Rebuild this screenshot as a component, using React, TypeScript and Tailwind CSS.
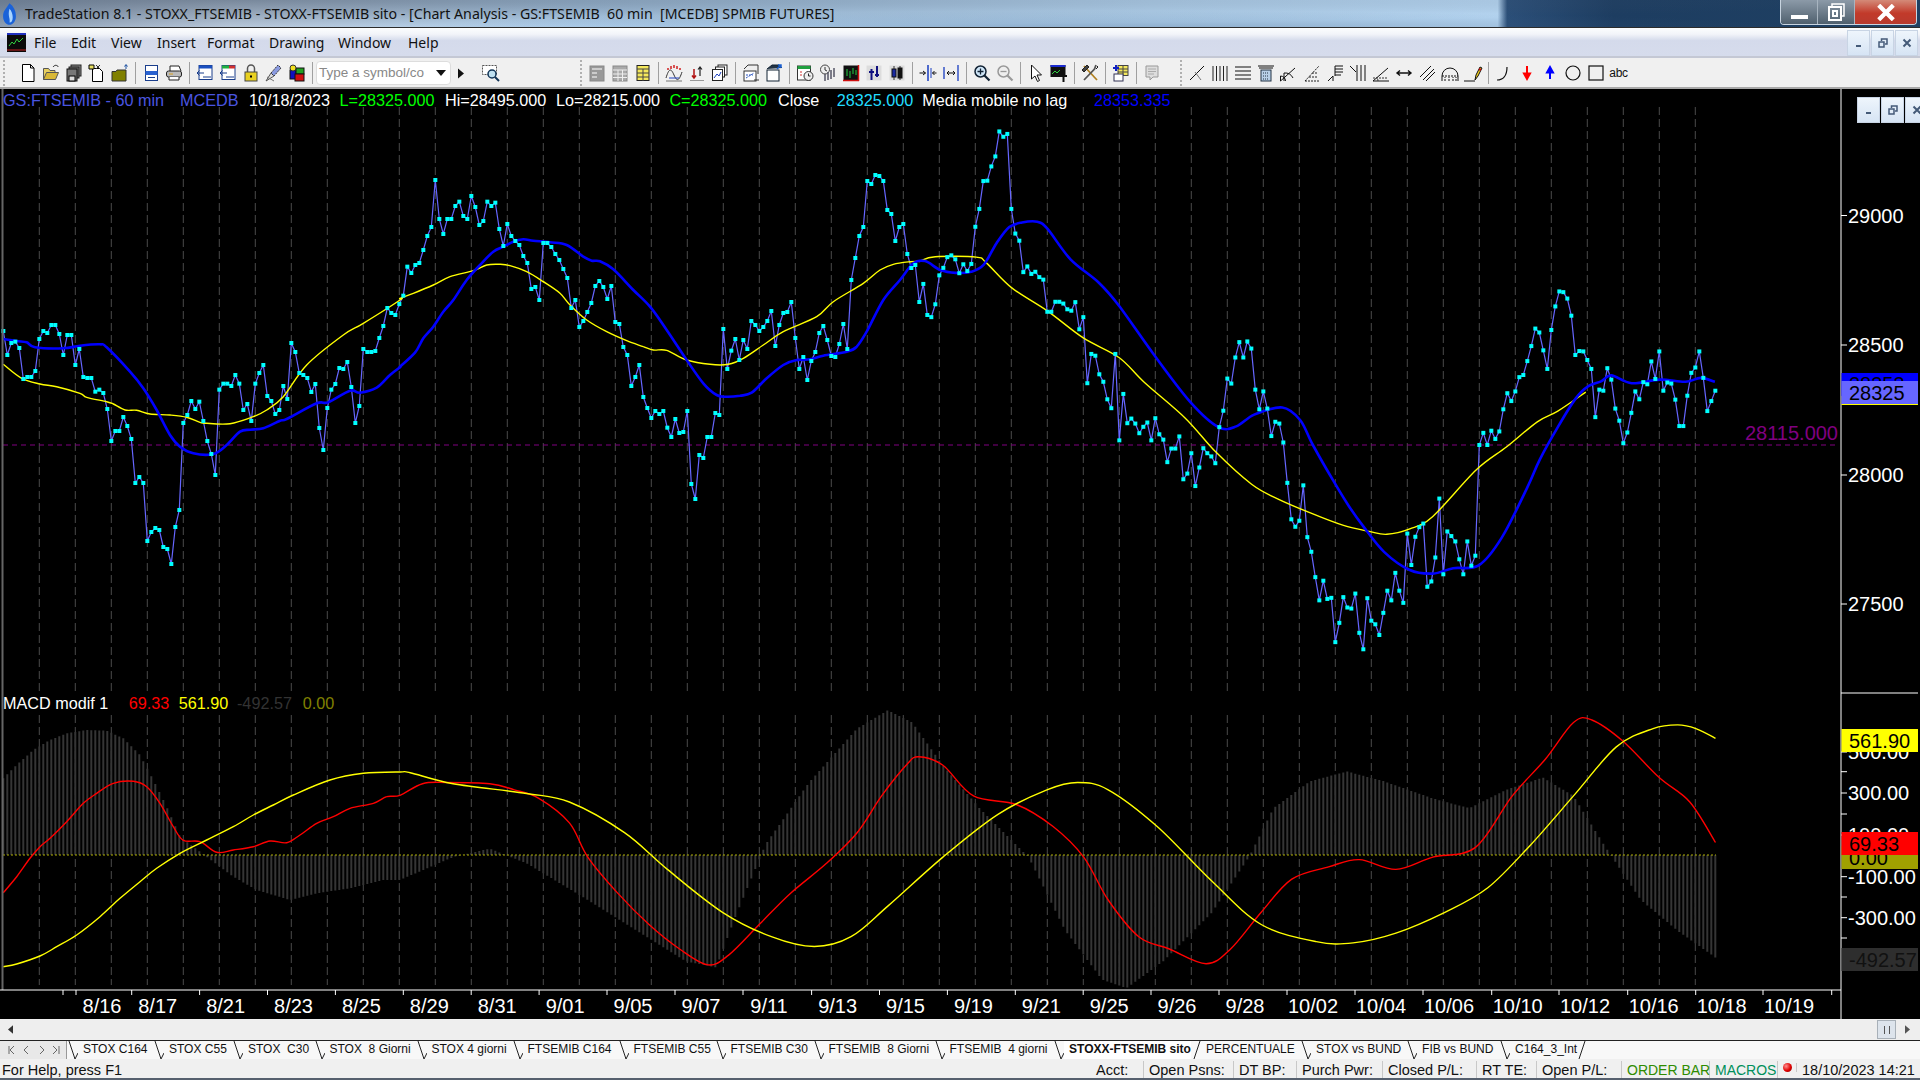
import React from "react";

// bar closes read off the chart, bar spacing is 4px
const closesA = [93,165,129,125,144,237,231,231,213,117,93,99,75,75,102,165,105,105,195,147,231,234,234,275,269,279,327,423,393,393,351,378,417,549,531,549,723,696,684,690,741,747,792,681,630,369,345,303,327,305,363,423,462,525,269,251,251,258,225,251,330,312,363,251,219,195,288,303,342,330,258,297,129,156,219,225,234,276,252,384,450,324,269,252,204,207,186,261,369,318,147,156,156,153,114,78,24,39,45,12];
const closesB = [527,440,459,435,429,390,348,321,180,297,342,297,297,258,245,288,297,228,261,315,303,245,258,248,327,378,312,348,363,375,408,429,507,501,540,369,369,381,402,420,447,474,564,540,621,603,576,549,498,483,501,537,498,606,612,681,705,798,771,735,831,864,894,873,882,873,923,951,897,939,936,873,1092,1137,1005,1014,951,951,879,885,627,747,692,657,720,660,687,603,615,633,621,603,573,678,615,579,576,546,654,747,711,780,723,696,639,618,660,708,711,672,612,687,480,414,348,321,183,192,165,168,183,270,282,363,321,312,402,444,435,546];
const closesC = [459,546,552,516,435,414,384,379,390,429,404,423,403,299,249,171,170,130,102,32,47,39,249,318,338,426,410,431,425,440,447,537,537,509,509,514,530,534,510,586,552,737,655,660,712,733,782,807,655,897,767,849,836,850,877,859,847,897,835,880,895,958,920,920,886,1006,990,933,1025,973,919,933,942,961,860,814,724,738,665,622,665,620,640,755,810,760,808,885,845,850,903,1016,1118,1139,1122,1023,1168,1209,1280,1345,1290,1341,1338,1462,1408,1336,1365,1368,1326,1436,1482,1339,1402,1412,1442,1380,1318,1345,1268,1318,1352,1158,1246,1167,1140,1130,1307,1292,1225,1060,1272,1152,1165,1180,1230,1272,1180,1248,1220,910,876,910,870,893,872,810,765,787,760,720,714,675,633,584,595,645,697,588,522,480,482,500,548,658,647,648,672,697,832,755,758,695,727,808,842,905,875,820,760,782,734,740,676,725,648,758,735,738,783,857,857,772,708,693,648,722,815,787,758];

const bars: [number, number][] = [
  ...closesA.map((v, i): [number, number] => [3.33 + i * 4, 300 + v / 3]),
  ...closesB.map((v, i): [number, number] => [403.33 + i * 4, 120 + v / 3]),
  ...closesC.map((v, i): [number, number] => [923.33 + i * 4, 120 + v / 2.8]),
];

type P = [number, number];
const left = (p: P[]) => p.map(([x, y]): P => [x / 3, 300 + y / 3]);
const mid = (p: P[]) => p.map(([x, y]): P => [400 + x / 3, 120 + y / 3]);
const right = (p: P[]) => p.map(([x, y]): P => [920 + x / 1.96, 120 + y / 2.8]);
const sub = (p: P[]) => p.map(([x, y]): P => [x / 3, 690 + y / 3]);
const shot = (p: P[]) => p.map(([x, y]): P => [x * 1.2245, y * 1.2245]);
const line = (p: P[]) => p.map(([x, y]) => `${x.toFixed(1)},${y.toFixed(1)}`).join(" ");

// the averages are smooth curves, so run the read-off points through catmull-rom
const smooth = (p: P[]) => {
  let d = `M${p[0][0].toFixed(1)} ${p[0][1].toFixed(1)}`;
  for (let i = 0; i < p.length - 1; i++) {
    const a = p[Math.max(i - 1, 0)];
    const b = p[i];
    const c = p[i + 1];
    const e = p[Math.min(i + 2, p.length - 1)];
    const c1x = b[0] + (c[0] - a[0]) / 6;
    const c1y = b[1] + (c[1] - a[1]) / 6;
    const c2x = c[0] - (e[0] - b[0]) / 6;
    const c2y = c[1] - (e[1] - b[1]) / 6;
    d += `C${c1x.toFixed(1)} ${c1y.toFixed(1)} ${c2x.toFixed(1)} ${c2y.toFixed(1)} ${c[0].toFixed(1)} ${c[1].toFixed(1)}`;
  }
  return d;
};

const avgBlue = [
  ...left([[10,117],[50,123],[80,127],[105,142],[190,145],[240,137],[300,133],[320,142],[390,215],[430,265],[470,330],[510,405],[540,440],[580,460],[640,462],[680,435],[720,395],[750,389],[790,385],[840,362],[860,357],[950,310],[985,307],[1050,272],[1080,278],[1130,263],[1170,225],[1200,202]]),
  ...mid([[0,740],[45,698],[70,655],[100,620],[130,575],[160,540],[200,480],[240,435],[280,395],[310,380],[340,365],[370,358],[400,362],[450,367],[500,375],[550,410],[575,422],[600,424],[640,448],[700,510],[750,560],[800,630],[860,720],[910,790],[950,825],[980,830],[1020,827],[1055,818],[1100,775],[1150,735],[1190,720],[1230,718],[1270,707],[1340,695],[1370,680],[1400,635],[1450,540],[1500,480],[1540,430]]),
  ...right([[10,395],[40,420],[70,428],[100,425],[125,405],[150,345],[175,300],[200,287],[230,285],[250,305],[295,390],[350,455],[390,520],[460,660],[530,790],[585,860],[620,858],[655,825],[710,805],[745,840],[770,910],[810,1010],[840,1080],[870,1140],[910,1210],[960,1260],[1005,1270],[1045,1255],[1095,1247],[1140,1170],[1190,1030],[1215,950],[1250,860],[1285,780],[1310,745],[1335,732],[1355,715],[1395,737],[1450,727],[1500,733],[1530,722],[1558,733]]),
];

const avgYellow = [
  ...left([[10,193],[65,235],[120,252],[170,260],[240,280],[260,292],[320,305],[340,312],[375,330],[410,331],[450,342],[510,345],[560,352],[600,367],[620,370],[690,371],[760,350],[800,330],[850,290],[920,195],[1030,105],[1090,70],[1200,0]]),
  ...mid([[0,535],[40,520],[100,495],[150,470],[220,452],[260,435],[300,433],[330,437],[380,455],[430,485],[480,520],[510,555],[560,600],[620,635],[680,662],[730,680],[760,690],[800,691],[860,720],[930,733],[985,733],[1030,715],[1090,675],[1150,635],[1250,590],[1300,545],[1390,490],[1440,450],[1480,433],[1530,425],[1560,424]]),
  ...right([[0,395],[30,383],[110,384],[130,400],[180,470],[250,535],[320,610],[390,665],[440,735],[520,835],[580,930],[650,1020],[700,1060],[770,1103],[830,1135],[880,1152],[915,1160],[960,1145],[1005,1110],[1090,980],[1150,915],[1210,845],[1250,815],[1305,762]]),
];

const macdRed = [
  ...sub([[10,608],[50,560],[90,505],[120,470],[150,445],[200,395],[250,340],[290,310],[340,280],[400,274],[440,290],[480,340],[520,410],[550,451],[600,455],[650,487],[700,480],[760,470],[810,453],[860,458],[900,435],[950,400],[1000,380],[1050,355],[1120,340],[1160,320],[1200,316]]),
  ...shot([[345,640],[365,639],[400,640],[420,645],[440,652],[465,672],[480,700],[505,730],[530,755],[555,775],[578,788],[595,780],[620,755],[645,730],[675,705],[700,680],[720,650],[740,625],[750,618],[770,625],[795,650],[830,657],[860,675],[885,700],[905,735],[930,765],[955,775],[985,787],[1005,775],[1030,745],[1055,718],[1085,708],[1110,702],[1140,710],[1170,700],[1205,692],[1235,650],[1262,620],[1285,590],[1300,588],[1325,605],[1355,635],[1380,655],[1401,688]]),
];

const macdYellow = [
  ...sub([[10,830],[50,822],[120,798],[170,770],[230,735],[300,680],[360,625],[420,575],[470,535],[540,490],[620,450],[700,410],[760,375],[820,345],[880,315],[990,270],[1090,250],[1200,246]]),
  ...shot([[335,631],[370,640],[430,648],[465,655],[510,680],[545,710],[590,745],[630,765],[665,773],[695,765],[725,740],[770,700],[815,665],[855,645],[880,639],[905,645],[945,675],[990,720],[1030,755],[1075,769],[1105,770],[1140,762],[1180,745],[1215,725],[1250,690],[1285,650],[1320,610],[1350,595],[1370,592],[1385,595],[1401,603]]),
];

const histEdge = [
  ...sub([[10,265],[50,225],[100,180],[150,150],[200,130],[260,120],[320,122],[370,145],[420,195],[460,270],[500,350],[540,440],[600,485],[640,515],[700,560],[770,600],[870,630],[950,610],[1050,595],[1150,570],[1200,570]]),
  ...shot([[370,700],[400,693],[430,705],[480,735],[520,760],[560,785],[585,790],[600,750],[625,690],[660,640],[700,595],[725,580],[745,590],[770,625],[800,660],[840,700],[870,760],[900,800],[920,807],[950,785],[990,745],[1020,700],[1040,660],[1070,638],[1100,630],[1130,638],[1170,652],[1200,660],[1230,645],[1260,635],[1285,650],[1310,690],[1340,735],[1370,760],[1401,782]]),
];

const edgeAt = (x: number) => {
  for (let i = 1; i < histEdge.length; i++) {
    const [x0, y0] = histEdge[i - 1];
    const [x1, y1] = histEdge[i];
    if (x <= x1) return y0 + ((y1 - y0) * (x - x0)) / (x1 - x0);
  }
  return histEdge[histEdge.length - 1][1];
};

const histPath = bars.map(([x]) => `M${x.toFixed(1)} 855V${edgeAt(x).toFixed(1)}`).join("");
const gridX = Array.from({ length: 47 }, (_, i) => 39.3 + i * 36);

const dates: [string, number][] = [
  ["8/16", 76],["8/17", 131.7],["8/21", 199.6],["8/23", 267.5],["8/25", 335.4],["8/29", 403.3],["8/31", 471.2],["9/01", 539.1],["9/05", 607],["9/07", 675],["9/11", 743],["9/13", 811.6],["9/15", 879.5],["9/19", 947.4],["9/21", 1015.3],["9/25", 1083.2],["9/26", 1151],["9/28", 1219],["10/02", 1287],["10/04", 1355],["10/06", 1423],["10/10", 1491.7],["10/12", 1559],["10/16", 1627.7],["10/18", 1695.7],["10/19", 1763],
];

const Chart = () => (
  <svg viewBox="0 89 1920 930" className="absolute inset-0 h-full w-full">
    <g stroke="#4a4a4a" strokeDasharray="8 4">
      {gridX.map((x) => (
        <path key={x} d={`M${x} 107V693M${x} 715V985`} />
      ))}
    </g>
    <path d={histPath} stroke="#353535" strokeWidth="2" fill="none" />
    <path d="M3 855H1716" stroke="#b0b000" strokeDasharray="2 2" />
    <path d="M3 445H1836" stroke="#800080" strokeDasharray="5 4" />
    <polyline points={line(bars)} fill="none" stroke="#6666ff" strokeWidth="1.2" />
    <path d={smooth(avgYellow)} fill="none" stroke="#ffff00" strokeWidth="1.4" />
    <path d={smooth(avgBlue)} fill="none" stroke="#0000ff" strokeWidth="2.6" />
    {bars.map(([x, y]) => (
      <rect key={x} x={x - 2} y={y - 2} width="4" height="4" fill="#00ffff" />
    ))}
    <path d={smooth(macdRed)} fill="none" stroke="#ff0000" strokeWidth="1.4" />
    <path d={smooth(macdYellow)} fill="none" stroke="#ffff00" strokeWidth="1.4" />

    <path d="M2.5 89V990" stroke="#666" strokeWidth="2" />
    <path d="M0 990H1841" stroke="#fff" />
    <path d="M1841 89V1019M1841 693H1918" stroke="#fff" />
    <g stroke="#fff">
      {dates.map(([d, x]) => (
        <path key={d} d={`M${x} 990V995`} />
      ))}
      <path d="M63 990V995M1831.7 990V995" />
      {[215.5, 345, 475, 604, 752, 771.7, 793, 814, 835, 876.7, 897, 917.7, 938].map((y) => (
        <path key={y} d={`M1841 ${y}H1847`} />
      ))}
    </g>
    <g fill="#fff" fontSize="20" textAnchor="middle">
      {dates.map(([d, x]) => (
        <text key={d} x={x + 26} y="1013">{d}</text>
      ))}
    </g>
    <text x="1838" y="440" fontSize="20" fill="#800080" textAnchor="end">28115.000</text>
    <g fill="#fff" fontSize="20">
      <text x="1848" y="222.5">29000</text>
      <text x="1848" y="352">28500</text>
      <text x="1848" y="482">28000</text>
      <text x="1848" y="611">27500</text>
      <text x="1848" y="759">500.00</text>
      <text x="1848" y="800">300.00</text>
      <text x="1848" y="842">100.00</text>
      <text x="1848" y="883.7">-100.00</text>
      <text x="1848" y="924.7">-300.00</text>
    </g>

    <rect x="1841.5" y="373" width="76.5" height="23" fill="#0000ff" />
    <text x="1849" y="391" fontSize="20" fill="#000">28353</text>
    <rect x="1841.5" y="381" width="76.5" height="23" fill="#6666ff" />
    <rect x="1841.5" y="404" width="76.5" height="1" fill="#ffff00" />
    <text x="1849" y="400" fontSize="20" fill="#000">28325</text>

    <rect x="1841.5" y="729" width="76.5" height="23" fill="#ffff00" />
    <text x="1849" y="748" fontSize="20" fill="#000">561.90</text>
    <rect x="1841.5" y="846" width="76.5" height="23" fill="#a0a000" />
    <text x="1849" y="865" fontSize="20" fill="#000">0.00</text>
    <rect x="1841.5" y="832" width="76.5" height="23" fill="#ff0000" />
    <text x="1849" y="851" fontSize="20" fill="#000">69.33</text>
    <rect x="1841.5" y="948" width="76.5" height="23" fill="#2e2e2e" />
    <text x="1849" y="967" fontSize="20" fill="#111">-492.57</text>
  </svg>
);

const Ico = ({ children }: { children: React.ReactNode }) => (
  <svg viewBox="0 0 20 20" className="h-[20px] w-[20px]" fill="none" stroke="#000" strokeWidth="1">
    {children}
  </svg>
);

// toolbar drawings, in the order they sit on the bar
const icons: Record<string, React.ReactNode> = {
  newDoc: <path d="M4.5 1.5h8l3.5 3.5v13.5h-11.500zM12.500 1.500v3.500h3.500" fill="#fff" />,
  open: <><path d="M2.500 16.500v-11h5l1.500 2h5v2" fill="#e8d060" stroke="#555" /><path d="M2.500 16.500l3-7h12l-3 7z" fill="#d8b838" stroke="#555" /><path d="M12 4c2-2.500 4-2 5.500 0" stroke="#222" /></>,
  disks: <><rect x="7" y="2" width="10" height="11" fill="#888" stroke="#222" /><rect x="5" y="4" width="10" height="11" fill="#666" stroke="#222" /><rect x="3" y="6" width="10" height="12" fill="#777" stroke="#111" /><rect x="5" y="13" width="6" height="5" fill="#ddd" /></>,
  note: <><path d="M5.500 5.500h7l3 3v10h-10z" fill="#fff" /><path d="M2 2l5 0v4h-5z" fill="#e8e060" /><path d="M9 2l4 4M13 2l-4 4" stroke="#333" /></>,
  folderUp: <><path d="M2 8.500h4l1-1.500h9v11h-14z" fill="#808000" stroke="#333" /><path d="M16 6v-4M14.500 3.500l1.500-2 1.500 2" stroke="#1a4fa0" /></>,
  preview: <><rect x="4.500" y="2.500" width="12" height="15" fill="#fff" stroke="#1a3e8c" /><rect x="4.500" y="8" width="12" height="4" fill="#2a62d0" stroke="none" /><path d="M7 14.500h7" stroke="#1a3e8c" /></>,
  printer: <><path d="M6 8V3h9l2 5" fill="#fff" stroke="#222" /><rect x="2.500" y="8" width="15" height="6" rx="2" fill="#bbb" stroke="#222" /><path d="M5 14v3h10v-3" fill="#fff" stroke="#222" /><path d="M5 11h4" stroke="#d8a020" /></>,
  winBlue: <><rect x="4" y="2.500" width="13" height="14" fill="#fff" stroke="#1a3e8c" /><rect x="4" y="2.500" width="13" height="3" fill="#1a4fc0" stroke="none" /><path d="M9 10H2M4.500 7.500L2 10l2.500 2.500M8 14h8" stroke="#1a3e8c" /></>,
  winGreen: <><rect x="4" y="2.500" width="13" height="14" fill="#fff" stroke="#1a3e8c" /><rect x="4" y="2.500" width="7" height="3" fill="#20b040" stroke="none" /><rect x="11" y="2.500" width="6" height="3" fill="#d03030" stroke="none" /><path d="M9 10H2M4.500 7.500L2 10l2.500 2.500M8 14h8" stroke="#1a3e8c" /></>,
  lock: <><path d="M6.500 9V5.500a3.500 3.500 0 017 0V9" stroke="#555" strokeWidth="1.500" /><rect x="4" y="9" width="12" height="9" fill="#e8d020" stroke="#444" /><rect x="9" y="12.500" width="2" height="2" fill="#000" stroke="none" /></>,
  penBlue: <><path d="M2 18l5-8 3 3z" fill="#ddd" stroke="#555" /><path d="M7 10l7-8 3 3-7 8z" fill="#8a9ae0" stroke="#333" strokeDasharray="2 1" /><path d="M3 14l7 4" stroke="#777" /></>,
  blocks: <><rect x="3" y="7" width="6" height="9" fill="#1010c0" stroke="#111" /><rect x="9" y="5" width="8" height="6" fill="#20a020" stroke="#111" /><rect x="8" y="11" width="9" height="7" fill="#d01010" stroke="#111" /><circle cx="6" cy="5" r="3" fill="#f0e020" stroke="#333" /></>,
  search: <><rect x="1.500" y="2.500" width="14" height="9" fill="#fff" stroke="#555" strokeDasharray="2 1" /><circle cx="11" cy="11" r="4" fill="#bfe0f0" stroke="#135" strokeWidth="1.500" /><path d="M14 14l4 4" stroke="#135" strokeWidth="2" /></>,
  grayCalc: <><rect x="3" y="3" width="14" height="15" fill="#999" stroke="#888" /><path d="M5 6h10M5 10h5M5 14h5" stroke="#ddd" strokeWidth="1.500" /></>,
  grayTable: <><rect x="3" y="3" width="14" height="15" fill="#aaa" stroke="#888" /><path d="M3 7h14M3 11h14M3 14.500h14M8 7v11M12.500 7v11" stroke="#eee" /></>,
  yellowTable: <><rect x="4" y="2.500" width="12" height="15" fill="#f4e85c" stroke="#222" /><path d="M4 6h12M4 10h12M4 14h12M10 6v12" stroke="#444" /></>,
  wave: <><path d="M2 15c3-10 5-10 8-3s5 6 8-3" stroke="#333" /><path d="M4 5v2M7 3v3M10 2v3M13 3v3M16 5v2" stroke="#d02020" strokeWidth="1.500" /><path d="M5 15h10" stroke="#2040c0" /><path d="M2 18h16" stroke="#777" /></>,
  arrowsRed: <><path d="M7 6v9M5 12.500L7 15l2-2.500" stroke="#b01010" strokeWidth="1.500" /><path d="M13 13V4M11 6.500L13 4l2 2.500" stroke="#222" strokeWidth="1.200" /><path d="M3 17.500h14" stroke="#999" /></>,
  stackChart: <><rect x="8" y="2" width="9" height="10" fill="#fff" stroke="#222" /><rect x="5.500" y="4" width="9" height="10" fill="#fff" stroke="#222" /><rect x="2.500" y="6.500" width="10" height="11" fill="#fff" stroke="#222" /><path d="M4 15l3-4 2 2 2-4" stroke="#1a3ec0" /></>,
  chartArrow: <><path d="M3 6l4-4h10v9" fill="#eee" stroke="#333" /><rect x="3" y="8" width="12" height="10" fill="#fff" stroke="#333" /><path d="M5 15l8-5M5 12h7" stroke="#2a55c0" strokeDasharray="2 1" /><path d="M18 17h-5" stroke="#333" /></>,
  winArrow: <><path d="M3 6l5-4h7l3 3" fill="#234" stroke="#123" /><rect x="3" y="7" width="12" height="11" fill="#fff" stroke="#123" /><path d="M13 6l4-4M14 2h3v3" stroke="#1a5fd0" strokeWidth="1.500" /></>,
  calClock: <><rect x="2.500" y="3" width="13" height="14" fill="#fff" stroke="#333" /><rect x="2.500" y="3" width="13" height="3" fill="#20a040" stroke="none" /><path d="M5 9h2M5 12h2" stroke="#d03030" /><circle cx="13.500" cy="13" r="4.500" fill="#eee" stroke="#333" /><path d="M13.500 10.500V13h2" stroke="#222" /></>,
  clockBars: <><circle cx="7" cy="6.500" r="4.500" fill="#eee" stroke="#444" /><path d="M7 4v3l2 1" stroke="#333" /><path d="M7 11v7M10 9v8M13 7v9M16 5v9" stroke="#556" strokeWidth="1.500" /></>,
  boxBars: <><rect x="2.500" y="2.500" width="15" height="15" fill="#101010" stroke="none" /><path d="M17.500 2v16" stroke="#d01010" strokeWidth="1.500" /><path d="M2 17.500h16" stroke="#d01010" strokeWidth="1.500" /><path d="M6 6v7M9 8v7M12 5v6M15 7v5" stroke="#20d040" /></>,
  ohlc: <><rect x="2.500" y="2.500" width="15" height="15" fill="#ddd" stroke="none" /><path d="M7.500 6v11M5 9h5M13 3v11M11 12h4" stroke="#101080" strokeWidth="2" /></>,
  candles: <><rect x="2.500" y="2.500" width="15" height="15" fill="#ddd" stroke="none" /><path d="M7 3v14M13 3v14" stroke="#333" /><rect x="5" y="6" width="4" height="8" fill="#1a2aa0" stroke="#111" /><rect x="11" y="5" width="4" height="10" fill="#111" stroke="#111" /></>,
  shrink: <><path d="M10 2v16" stroke="#1a3ec0" strokeWidth="1.500" /><path d="M13 5v10" stroke="#1a3ec0" /><path d="M1.500 10h6M5 8l2.500 2L5 12M18.500 10h-4M16.500 8l-2 2 2 2" stroke="#111" /></>,
  stretch: <><path d="M3 4v12M17 2v16" stroke="#1a3ec0" strokeWidth="1.300" /><path d="M6 10h8M8 8l-2 2 2 2M12 8l2 2-2 2" stroke="#111" /></>,
  zoomIn: <><circle cx="8.500" cy="8.500" r="5.500" fill="#cfe6f8" stroke="#123" strokeWidth="1.500" /><path d="M12.500 12.500l5 5" stroke="#123" strokeWidth="2.200" /><path d="M5.500 8.500h6M8.500 5.500v6" stroke="#123" strokeWidth="1.300" /></>,
  zoomOut: <><circle cx="8.500" cy="8.500" r="5.500" fill="#eee" stroke="#999" strokeWidth="1.500" /><path d="M12.500 12.500l5 5" stroke="#999" strokeWidth="2.200" /><path d="M5.500 8.500h6" stroke="#999" strokeWidth="1.300" /></>,
  cursor: <path d="M5.500 2v14l3.500-3 2.500 5.500 2-1-2.500-5.500h4.500z" fill="#fff" stroke="#111" />,
  boxText: <><rect x="1.500" y="2" width="15" height="12" fill="#101010" stroke="none" /><rect x="1.500" y="2" width="15" height="2" fill="#1a2ad0" stroke="none" /><path d="M3 11l3-3 2 2 3-3" stroke="#30d040" /><path d="M11 13h7M14.500 13v6" stroke="#111" strokeWidth="2" /></>,
  tools: <><path d="M4 3l13 14" stroke="#b08020" strokeWidth="1.800" /><path d="M2 7l5-5 2 2-5 5z" fill="#444" stroke="#222" /><path d="M16 2l-1.500 4L4 17" stroke="#555" strokeWidth="1.800" /><path d="M17 3l1 1-2 2" stroke="#222" /></>,
  addTable: <><rect x="7" y="2.500" width="10" height="10" fill="#f4e85c" stroke="#444" /><path d="M7 6h10M7 9h10M12 2.500v10" stroke="#444" /><path d="M2 5h6M5 2v6" stroke="#1020c0" strokeWidth="2" /><rect x="3" y="11" width="9" height="7" fill="#fff" stroke="#335" /></>,
  grayNote: <><path d="M4 3h12v11h-5l-3 3v-3h-4z" fill="#ddd" stroke="#999" /><path d="M6 6h8M6 8.500h8M6 11h6" stroke="#aaa" /></>,
  trend: <><path d="M3 17L17 3" stroke="#111" /><path d="M8 9l6 8" stroke="#777" /></>,
  vLines: <path d="M3 3v15M6.500 3v15M10 3v15M13.500 3v15M17 3v15" stroke="#222" />,
  hLines: <path d="M2 4h16M2 8h16M2 12h16M2 16h16" stroke="#111" strokeWidth="1.200" />,
  calcLines: <><path d="M2 3h16M3 5h14" stroke="#111" /><rect x="5" y="7" width="10" height="11" fill="#b8d0e8" stroke="#234" /><path d="M7 10h6M7 13h6M7 16h6" stroke="#234" strokeDasharray="1 1" /></>,
  fan: <path d="M1.500 18v-5a5 5 0 015 5M5 18v-8a9 9 0 019 5M1.500 18L16 5" stroke="#111" />,
  triDots: <path d="M3 18h15M3 18L17 3M7 14h8M10 10h6" stroke="#222" strokeDasharray="2 1" />,
  fibs: <><path d="M3 18l5-5v5" stroke="#111" /><path d="M10 3h8M10 6h8M10 9h8M10 12h6M10 3v10" stroke="#111" /></>,
  vFib: <path d="M2 3l6 6M9 2v16M13 2v16M17 2v16" stroke="#111" />,
  angle: <><path d="M2 18h16M2 18L17 5" stroke="#111" /><path d="M7 18c0-2-1-3-1-4M2 15h14" stroke="#333" strokeDasharray="2 1" /></>,
  hArrow: <path d="M3 10h14M6 7.500L3 10l3 2.500M14 7.500l3 2.500-3 2.500" stroke="#111" strokeWidth="1.400" />,
  parallel: <path d="M3 14L14 3M6 17L17 6M9 18L18 9" stroke="#111" />,
  arcs: <><path d="M2 18v-5a8 8 0 0116 0v5" stroke="#111" /><path d="M5 18v-4M9 18v-4M13 18v-4M16 18v-4M2 13h16" stroke="#111" strokeDasharray="2 1" /></>,
  pencil: <><path d="M1 18h11" stroke="#111" /><path d="M12 17l1-5 4-8 2 1-4 8z" fill="#f0d020" stroke="#111" /><path d="M16 6l2 1" stroke="#c01010" strokeWidth="2" /></>,
  curve: <path d="M3 17c6 0 10-4 10-13" stroke="#111" strokeWidth="1.200" />,
  down: <path d="M10 3v8M7 10.500h6L10 16z" fill="#ff0000" stroke="#ff0000" strokeWidth="2" />,
  up: <path d="M10 16V9M7 9.500h6L10 4z" fill="#0000ff" stroke="#0000ff" strokeWidth="2" />,
  circle: <circle cx="10" cy="10" r="7" stroke="#111" strokeWidth="1.200" />,
  square: <rect x="3" y="3" width="14" height="14" stroke="#111" strokeWidth="1.200" />,
};

const Sep = ({ w = "w-[8px]" }: { w?: string }) => (
  <div className={`flex justify-center ${w}`}>
    <div className="h-[22px] w-px bg-[#a0a0a0]" />
  </div>
);

const Grip = () => <div className="mx-[3px] h-[26px] w-[2px] border-l-2 border-dotted border-[#b0b0b0]" />;

const Tools = ({ names }: { names: string[] }) => (
  <>
    {names.map((n, i) => (
      <div key={n + i} className="flex w-[23px] justify-center">
        <Ico>{icons[n]}</Ico>
      </div>
    ))}
  </>
);

const Toolbar = () => (
  <div className="flex h-[31px] items-center border-b-2 border-[#a8a8a8] bg-[#f0f0f0] pt-[1px]">
    <Grip />
    <div className="w-[8px]" />
    <Tools names={["newDoc", "open", "disks", "note", "folderUp"]} />
    <Sep />
    <Tools names={["preview", "printer"]} />
    <Sep />
    <Tools names={["winBlue", "winGreen", "lock", "penBlue", "blocks"]} />
    <Sep />
    <div className="flex h-[24px] w-[135px] items-center justify-between rounded-sm border border-[#ddd] bg-white pl-[2px] pr-[4px]">
      <span className="text-[13.5px] text-[#888]">Type a symbol/co</span>
      <svg viewBox="0 0 10 6" className="h-[6px] w-[10px]"><path d="M0 0h10L5 6z" fill="#111" /></svg>
    </div>
    <div className="flex w-[20px] justify-center">
      <svg viewBox="0 0 6 10" className="h-[11px] w-[6px]"><path d="M0 0l6 5-6 5z" fill="#111" /></svg>
    </div>
    <div className="w-[8px]" />
    <Tools names={["search"]} />
    <div className="w-[75px]" />
    <Grip />
    <Tools names={["grayCalc", "grayTable", "yellowTable"]} />
    <Sep />
    <Tools names={["wave", "arrowsRed", "stackChart"]} />
    <Sep />
    <Tools names={["chartArrow", "winArrow"]} />
    <Sep />
    <Tools names={["calClock", "clockBars", "boxBars", "ohlc", "candles"]} />
    <Sep />
    <Tools names={["shrink", "stretch"]} />
    <Sep />
    <Tools names={["zoomIn", "zoomOut"]} />
    <Sep />
    <Tools names={["cursor", "boxText"]} />
    <Sep />
    <Tools names={["tools"]} />
    <Sep />
    <Tools names={["addTable"]} />
    <Sep />
    <Tools names={["grayNote"]} />
    <div className="w-[14px]" />
    <Grip />
    <Tools names={["trend", "vLines", "hLines", "calcLines", "fan", "triDots", "fibs", "vFib", "angle", "hArrow", "parallel", "arcs", "pencil"]} />
    <Sep />
    <Tools names={["curve", "down", "up", "circle", "square"]} />
    <div className="flex w-[23px] justify-center text-[12px] tracking-tight text-[#111]">abc</div>
  </div>
);

const menus: [string, string][] = [
  ["File", "w-[37px]"],["Edit", "w-[40px]"],["View", "w-[46px]"],["Insert", "w-[50px]"],["Format", "w-[62px]"],["Drawing", "w-[69px]"],["Window", "w-[70px]"],["Help", "w-[40px]"],
];

const MdiButtons = ({ className }: { className: string }) => (
  <div className={`flex gap-px ${className}`}>
    {["min", "restore", "close"].map((b) => (
      <div key={b} className="flex h-[26px] w-[23px] items-center justify-center border border-[#c8d4e4] bg-[linear-gradient(#eef5fc,#d6e4f4)]">
        <svg viewBox="0 0 10 10" className="h-[10px] w-[10px]" fill="none" stroke="#445a78" strokeWidth="1.500">
          {b === "min" && <path d="M2 8h5" strokeWidth="2" />}
          {b === "restore" && <path d="M1 4h5v5H1zM3.500 3V1h5.500v5H7" />}
          {b === "close" && <path d="M1.500 1.500l7 7M8.500 1.500l-7 7" strokeWidth="2" />}
        </svg>
      </div>
    ))}
  </div>
);

const TitleBar = () => (
  <div className="relative flex h-[28px] items-center border-b border-[#2c2c2c] bg-[radial-gradient(ellipse_at_12%_0%,rgba(70,85,105,0.55),transparent_70%),radial-gradient(ellipse_at_58%_110%,rgba(60,90,125,0.4),transparent_45%),linear-gradient(90deg,#8d9fb5_0%,#b6c6d8_12%,#b3d3f0_30%,#bbdcf8_60%,#b8d8f4_78%,#2a4e78_78.5%,#1d3d61_84%,#1f4062_100%)]">
    <svg viewBox="0 0 14 20" className="ml-[2px] h-[22px] w-[15px]">
      <path d="M7 0c4 3 6 7 6 12s-3 8-6 8-6-3-6-8C1 7 4 5 7 0z" fill="#1a62d8" />
      <path d="M7 5c2 2 3 5 3 8s-1 5-3 5c1-4-2-6 0-13z" fill="#a8d4ff" />
    </svg>
    <span className="ml-[8px] whitespace-pre font-['Noto_Sans'] text-[14.2px] text-[#111]">
      TradeStation 8.1 - STOXX_FTSEMIB - STOXX-FTSEMIB sito - [Chart Analysis - GS:FTSEMIB  60 min  [MCEDB] SPMIB FUTURES]
    </span>
    <div className="absolute right-[3px] top-0 flex h-[25px] w-[137px] overflow-hidden rounded-b-[4px] border border-t-0 border-[#c8d4e0]">
      <div className="flex w-[37px] items-end justify-center border-r border-[#a8b4c0] bg-[linear-gradient(#8c9aa8,#50606e)] pb-[5px]">
        <div className="h-[4px] w-[17px] bg-white" />
      </div>
      <div className="flex w-[37px] items-center justify-center border-r border-[#a8b4c0] bg-[linear-gradient(#8c9aa8,#50606e)]">
        <svg viewBox="0 0 18 18" className="h-[18px] w-[18px]" fill="none" stroke="#fff" strokeWidth="2">
          <path d="M5 3V1h12v12h-3" strokeWidth="1.500" />
          <path d="M2 4h12v13H2z" />
          <path d="M6 8h4v5H6z" />
        </svg>
      </div>
      <div className="flex flex-1 items-center justify-center bg-[linear-gradient(#d48a78,#c23a2a_55%,#b83a2e)]">
        <svg viewBox="0 0 16 14" className="h-[17px] w-[20px]" fill="none" stroke="#fff" strokeWidth="3.500">
          <path d="M2 1l12 12M14 1L2 13" />
        </svg>
      </div>
    </div>
  </div>
);

const MenuBar = () => (
  <div className="flex h-[30px] items-center border-b-2 border-[#c4c8d4] bg-[linear-gradient(#fcfdfe,#f2f4f9_22%,#d4daeb_45%,#d6dcec)]">
    <svg viewBox="0 0 19 19" className="ml-[7px] h-[19px] w-[19px]">
      <rect width="19" height="19" fill="#0a0a0a" />
      <path d="M0 0h19v2H0z" fill="#2030c0" />
      <path d="M2 13l3-4 2 2 3-5 2 3 4-4" stroke="#30d040" fill="none" />
      <path d="M0 17h19" stroke="#c02020" />
    </svg>
    <div className="ml-[8px] flex font-['Noto_Sans'] text-[14px] text-[#111]">
      {menus.map(([m, w]) => (
        <span key={m} className={w}>{m}</span>
      ))}
    </div>
    <MdiButtons className="ml-auto mr-[2px] pt-[1px]" />
  </div>
);

const legendTop: [string, string, string][] = [
  ["GS:FTSEMIB - 60 min", "w-[177px]", "text-[#4a55e0]"],
  ["MCEDB", "w-[69px]", "text-[#4a55e0]"],
  ["10/18/2023", "w-[90.600px]", "text-white"],
  ["L=28325.000", "w-[105.400px]", "text-[#00ff00]"],
  ["Hi=28495.000", "w-[111px]", "text-white"],
  ["Lo=28215.000", "w-[113.400px]", "text-white"],
  ["C=28325.000", "w-[108.600px]", "text-[#00ff00]"],
  ["Close", "w-[58.700px]", "text-white"],
  ["28325.000", "w-[85.700px]", "text-[#22ddff]"],
  ["Media mobile no lag", "w-[171.600px]", "text-white"],
  ["28353.335", "w-[90px]", "text-[#0000ff]"],
];

const legendMacd: [string, string, string][] = [
  ["MACD modif 1", "w-[125.700px]", "text-white"],
  ["69.33", "w-[50px]", "text-[#ff0000]"],
  ["561.90", "w-[58.300px]", "text-[#ffff00]"],
  ["-492.57", "w-[65.700px]", "text-[#333333]"],
  ["0.00", "w-[50px]", "text-[#808000]"],
];

const Legend = ({ items, className }: { items: [string, string, string][]; className: string }) => (
  <div className={`absolute left-[3px] flex text-[16.200px] leading-[20px] ${className}`}>
    {items.map(([t, w, c]) => (
      <span key={t} className={`whitespace-pre ${w} ${c}`}>{t}</span>
    ))}
  </div>
);

const tabs: [string, string][] = [
  ["STOX C164", "w-[76px]"],["STOX C55", "w-[69px]"],["STOX  C30", "w-[71.500px]"],["STOX  8 Giorni", "w-[92px]"],["STOX 4 giorni", "w-[86px]"],["FTSEMIB C164", "w-[96px]"],["FTSEMIB C55", "w-[87px]"],["FTSEMIB C30", "w-[88px]"],["FTSEMIB  8 Giorni", "w-[111px]"],["FTSEMIB  4 giorni", "w-[109.600px]"],
];

const TabEdge = ({ flip }: { flip?: boolean }) => (
  <svg viewBox="0 0 10 18" className="h-[18px] w-[10px] shrink-0" fill="none" stroke="#222">
    {flip ? <path d="M3 18L9 0" /> : <path d="M1 0l6 18M10 12l-3 6" />}
  </svg>
);

const Tabs = () => (
  <div className="flex h-[19px] items-start border-t border-[#222] bg-[#f8f8f8] text-[12px] leading-[17px] text-[#111]">
    <div className="flex h-[18px] w-[67px] items-center justify-around border-r border-[#999] bg-[#e8e8e8] px-[2px] text-[#777]">
      {["M4 1v8M9 1L5 5l4 4", "M8 1L4 5l4 4", "M4 1l4 4-4 4", "M2 1l4 4-4 4M8 1v8"].map((d) => (
        <svg key={d} viewBox="0 0 10 10" className="h-[10px] w-[10px]" fill="none" stroke="#666"><path d={d} /></svg>
      ))}
    </div>
    <div className="flex pl-[1px]">
      <TabEdge />
      {tabs.map(([t, w]) => (
        <React.Fragment key={t}>
          <span className={`whitespace-pre pl-[5px] ${w}`}>{t}</span>
          <TabEdge />
        </React.Fragment>
      ))}
      <span className="h-[18px] w-[127px] whitespace-pre bg-white pl-[5px] font-bold">STOXX-FTSEMIB sito</span>
      <TabEdge flip />
      <span className="w-[100px] pl-[5px]">PERCENTUALE</span>
      <TabEdge />
      <span className="w-[96px] pl-[5px]">STOX vs BUND</span>
      <TabEdge />
      <span className="w-[83px] pl-[5px]">FIB vs BUND</span>
      <TabEdge />
      <span className="w-[66px] pl-[5px]">C164_3_Int</span>
      <TabEdge flip />
    </div>
  </div>
);

const statusCells: [string, string][] = [
  ["Open Psns:", "w-[90px]"],["DT BP:", "w-[63px]"],["Purch Pwr:", "w-[86px]"],["Closed P/L:", "w-[94px]"],["RT TE:", "w-[60px]"],["Open P/L:", "w-[85px]"],
];

const StatusBar = () => (
  <div className="flex h-[19px] items-center whitespace-pre bg-[#f0f0f0] pt-[4px] text-[14.500px] text-[#111]">
    <span className="w-[1096px] pl-[2px]">For Help, press F1</span>
    <span className="w-[48px] border-r border-[#c8c8c8] leading-[19px]">Acct:</span>
    {statusCells.map(([t, w]) => (
      <span key={t} className={`border-r border-[#c8c8c8] pl-[5px] leading-[19px] ${w}`}>{t}</span>
    ))}
    <span className="w-[88px] border-r border-[#c8c8c8] pl-[5px] text-[14px] leading-[19px] text-[#2e8b00]">ORDER BAR</span>
    <span className="w-[68px] border-r border-[#c8c8c8] pl-[5px] text-[14px] leading-[19px] text-[#008f5a]">MACROS</span>
    <span className="flex w-[19px] justify-center self-start border-r border-[#c8c8c8]">
      <span className="h-[9px] w-[9px] rounded-full bg-[radial-gradient(circle_at_35%_35%,#ff9090,#e00000_55%,#800000)]" />
    </span>
    <span className="pl-[5px]">18/10/2023 14:21</span>
  </div>
);

export default function App() {
  return (
    <div className="flex h-[1080px] w-[1920px] flex-col overflow-hidden bg-[#f0f0f0] font-['Liberation_Sans',sans-serif]">
      <TitleBar />
      <MenuBar />
      <Toolbar />
      <div className="relative h-[930px] bg-black">
        <Chart />
        <Legend items={legendTop} className="top-[1px]" />
        <Legend items={legendMacd} className="top-[604px]" />
        <MdiButtons className="absolute right-[-8px] top-[8px]" />
      </div>
      <div className="flex h-[21px] items-center justify-between bg-[#eeeeee] pl-[8px] pr-[10px]">
        <svg viewBox="0 0 6 10" className="h-[9px] w-[5px]"><path d="M6 0L0 5l6 5z" fill="#333" /></svg>
        <div className="ml-auto mr-[9px] flex h-[19px] w-[19px] items-center justify-center border border-[#a8b0b8] bg-[#dde4ec]">
          <div className="h-[8px] w-[6px] border-x border-[#555]" />
        </div>
        <svg viewBox="0 0 6 10" className="h-[9px] w-[5px]"><path d="M0 0l6 5-6 5z" fill="#555" /></svg>
      </div>
      <Tabs />
      <StatusBar />
      <div className="relative h-[2px] bg-[#56606e]" />
    </div>
  );
}
